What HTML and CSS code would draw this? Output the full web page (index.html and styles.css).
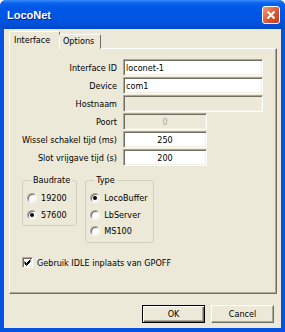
FILE: index.html
```html
<!DOCTYPE html>
<html>
<head>
	<title>LocoNet</title>
	<link rel="stylesheet" href="styles.css">
</head>
<body>
<div class="window">
	<div class="titlebar">
		<span class="title">LocoNet</span>
		<button class="close">
			<svg width="10" height="10" viewBox="0 0 10 10"><path d="M1.5 1.5L8.5 8.5M8.5 1.5L1.5 8.5" stroke="#fff" stroke-width="2"/></svg>
		</button>
	</div>
	<div class="client">
		<div class="tabs">
			<div class="tab active">Interface</div>
			<div class="tab">Options</div>
		</div>
		<div class="panel">
			<div class="form">
				<label>Interface ID</label>
				<input class="field" type="text" value="loconet-1">
				<label>Device</label>
				<input class="field" type="text" value="com1">
				<label>Hostnaam</label>
				<input class="field" type="text" value="" disabled>
				<label>Poort</label>
				<input class="field short" type="text" value="0" disabled>
				<label>Wissel schakel tijd (ms)</label>
				<input class="field short" type="text" value="250">
				<label>Slot vrijgave tijd (s)</label>
				<input class="field short" type="text" value="200">
			</div>
			<div class="groups">
				<fieldset class="group baud">
					<legend>Baudrate</legend>
					<div class="option"><span class="radio"></span>19200</div>
					<div class="option"><span class="radio on"></span>57600</div>
				</fieldset>
				<fieldset class="group type">
					<legend>Type</legend>
					<div class="option"><span class="radio on"></span>LocoBuffer</div>
					<div class="option"><span class="radio"></span>LbServer</div>
					<div class="option"><span class="radio"></span>MS100</div>
				</fieldset>
			</div>
			<div class="check">
				<span class="box"><svg width="9" height="9" viewBox="0 0 9 9"><path d="M1.5 3.5L3.5 5.5L7.5 1.5M1.5 4.5L3.5 6.5L7.5 2.5M1.5 5.5L3.5 7.5L7.5 3.5" stroke="#000" stroke-width="1" fill="none"/></svg></span>
				Gebruik IDLE inplaats van GPOFF
			</div>
		</div>
		<div class="buttons">
			<button class="btn default">OK</button>
			<button class="btn">Cancel</button>
		</div>
	</div>
</div>
</body>
</html>
```
FILE: styles.css
```css
*{
	margin: 0;
	padding: 0;
	box-sizing: border-box;
}
body{
	background: #fff;
	font-family: "DejaVu Sans Condensed", "DejaVu Sans", sans-serif;
	font-size: 9px;
	color: #000;
}
.window{
	width: 285px;
	height: 332px;
	display: flex;
	flex-direction: column;
	background: #0553E0;
	border-radius: 6px 6px 0 0;
	overflow: hidden;
}
.titlebar{
	height: 29px;
	display: flex;
	align-items: center;
	justify-content: space-between;
	padding: 0 5px 0 7px;
	background: linear-gradient(to bottom, #3A8DFB 0px, #0A63F0 3px, #0058E6 8px, #0055E3 18px, #0051DB 24px, #0047C9 29px);
}
.title{
	color: #fff;
	font-family: "Liberation Sans", Arial, sans-serif;
	font-weight: bold;
	font-size: 11px;
	text-shadow: 1px 1px #0A1F8A;
}
.close{
	width: 18px;
	height: 18px;
	border: 1px solid #fff;
	border-radius: 3px;
	background: linear-gradient(to bottom right, #F09A7E, #D9512E 60%, #C63B18);
	display: flex;
	align-items: center;
	justify-content: center;
}
.client{
	flex: 1;
	margin: 0 4px 4px;
	background: #ECE9D8;
	display: flex;
	flex-direction: column;
}
.tabs{
	display: flex;
	align-items: flex-end;
	padding: 2px 0 0 5px;
	margin-bottom: -1px;
	position: relative;
	z-index: 1;
}
.tab{
	width: 42px;
	height: 15px;
	line-height: 13px;
	padding-left: 3px;
	background: #ECE9D8;
	border: 1px solid;
	border-color: #fff #716F64 transparent #fff;
	border-radius: 2px 2px 0 0;
}
.tab.active{
	width: 51px;
	height: 18px;
	line-height: 16px;
	padding-left: 4px;
	border-bottom-color: #ECE9D8;
	margin-right: -1px;
}
.panel{
	height: 246px;
	margin: 0 4px 0 5px;
	padding-top: 10px;
	border: 1px solid;
	border-color: #fff #716F64 #716F64 #fff;
	box-shadow: inset -1px -1px #ACA899;
}
.form{
	display: grid;
	grid-template-columns: 107px auto;
	column-gap: 6px;
	row-gap: 1px;
	align-items: center;
	justify-items: start;
}
.form label{
	justify-self: end;
	white-space: nowrap;
}
.field{
	width: 140px;
	height: 17px;
	padding: 0 2px;
	font: inherit;
	color: #000;
	background: #fff;
	border: 1px solid;
	border-color: #ACA899 #fff #fff #ACA899;
	box-shadow: inset 1px 1px #716F64, inset -1px -1px #F1EFE2;
	outline: none;
}
.field.short{
	width: 84px;
	text-align: center;
}
.field:disabled{
	background: #ECE9D8;
	color: #ACA899;
}
.groups{
	display: flex;
	align-items: flex-start;
	gap: 8px;
	margin: 9px 0 0 12px;
}
.group{
	border: 1px solid #D0D0BF;
	border-radius: 3px;
	padding: 4px 4px 2px;
}
.group.baud{
	width: 55px;
}
.group.type{
	width: 69px;
}
.group legend{
	margin-left: 4px;
	padding: 0 2px;
	line-height: 11px;
}
.option{
	display: flex;
	align-items: center;
	gap: 4px;
	height: 16.5px;
	white-space: nowrap;
}
.radio{
	width: 10px;
	height: 10px;
	border-radius: 50%;
	background: #fff;
	border: 1px solid;
	border-color: #ACA899 #fff #fff #ACA899;
	box-shadow: inset 1px 1px #716F64, inset -1px -1px #F1EFE2;
	display: flex;
	align-items: center;
	justify-content: center;
	flex: none;
}
.radio.on::after{
	content: "";
	width: 4px;
	height: 4px;
	border-radius: 50%;
	background: #000;
}
.check{
	display: flex;
	align-items: center;
	gap: 4px;
	margin: 14px 0 0 12px;
	height: 12px;
}
.box{
	width: 11px;
	height: 11px;
	background: #fff;
	border: 1px solid;
	border-color: #ACA899 #fff #fff #ACA899;
	box-shadow: inset 1px 1px #716F64, inset -1px -1px #F1EFE2;
	display: flex;
	align-items: center;
	justify-content: center;
}
.buttons{
	display: flex;
	justify-content: flex-end;
	gap: 6px;
	margin-top: 11px;
	padding-right: 7px;
}
.btn{
	width: 63px;
	height: 18px;
	font: inherit;
	color: #000;
	background: #ECE9D8;
	border: 1px solid;
	border-color: #fff #716F64 #716F64 #fff;
	box-shadow: inset -1px -1px #ACA899;
}
.btn.default{
	border: 1px solid #000;
	box-shadow: inset 1px 1px #fff, inset -1px -1px #716F64, inset -2px -2px #ACA899;
}
```
